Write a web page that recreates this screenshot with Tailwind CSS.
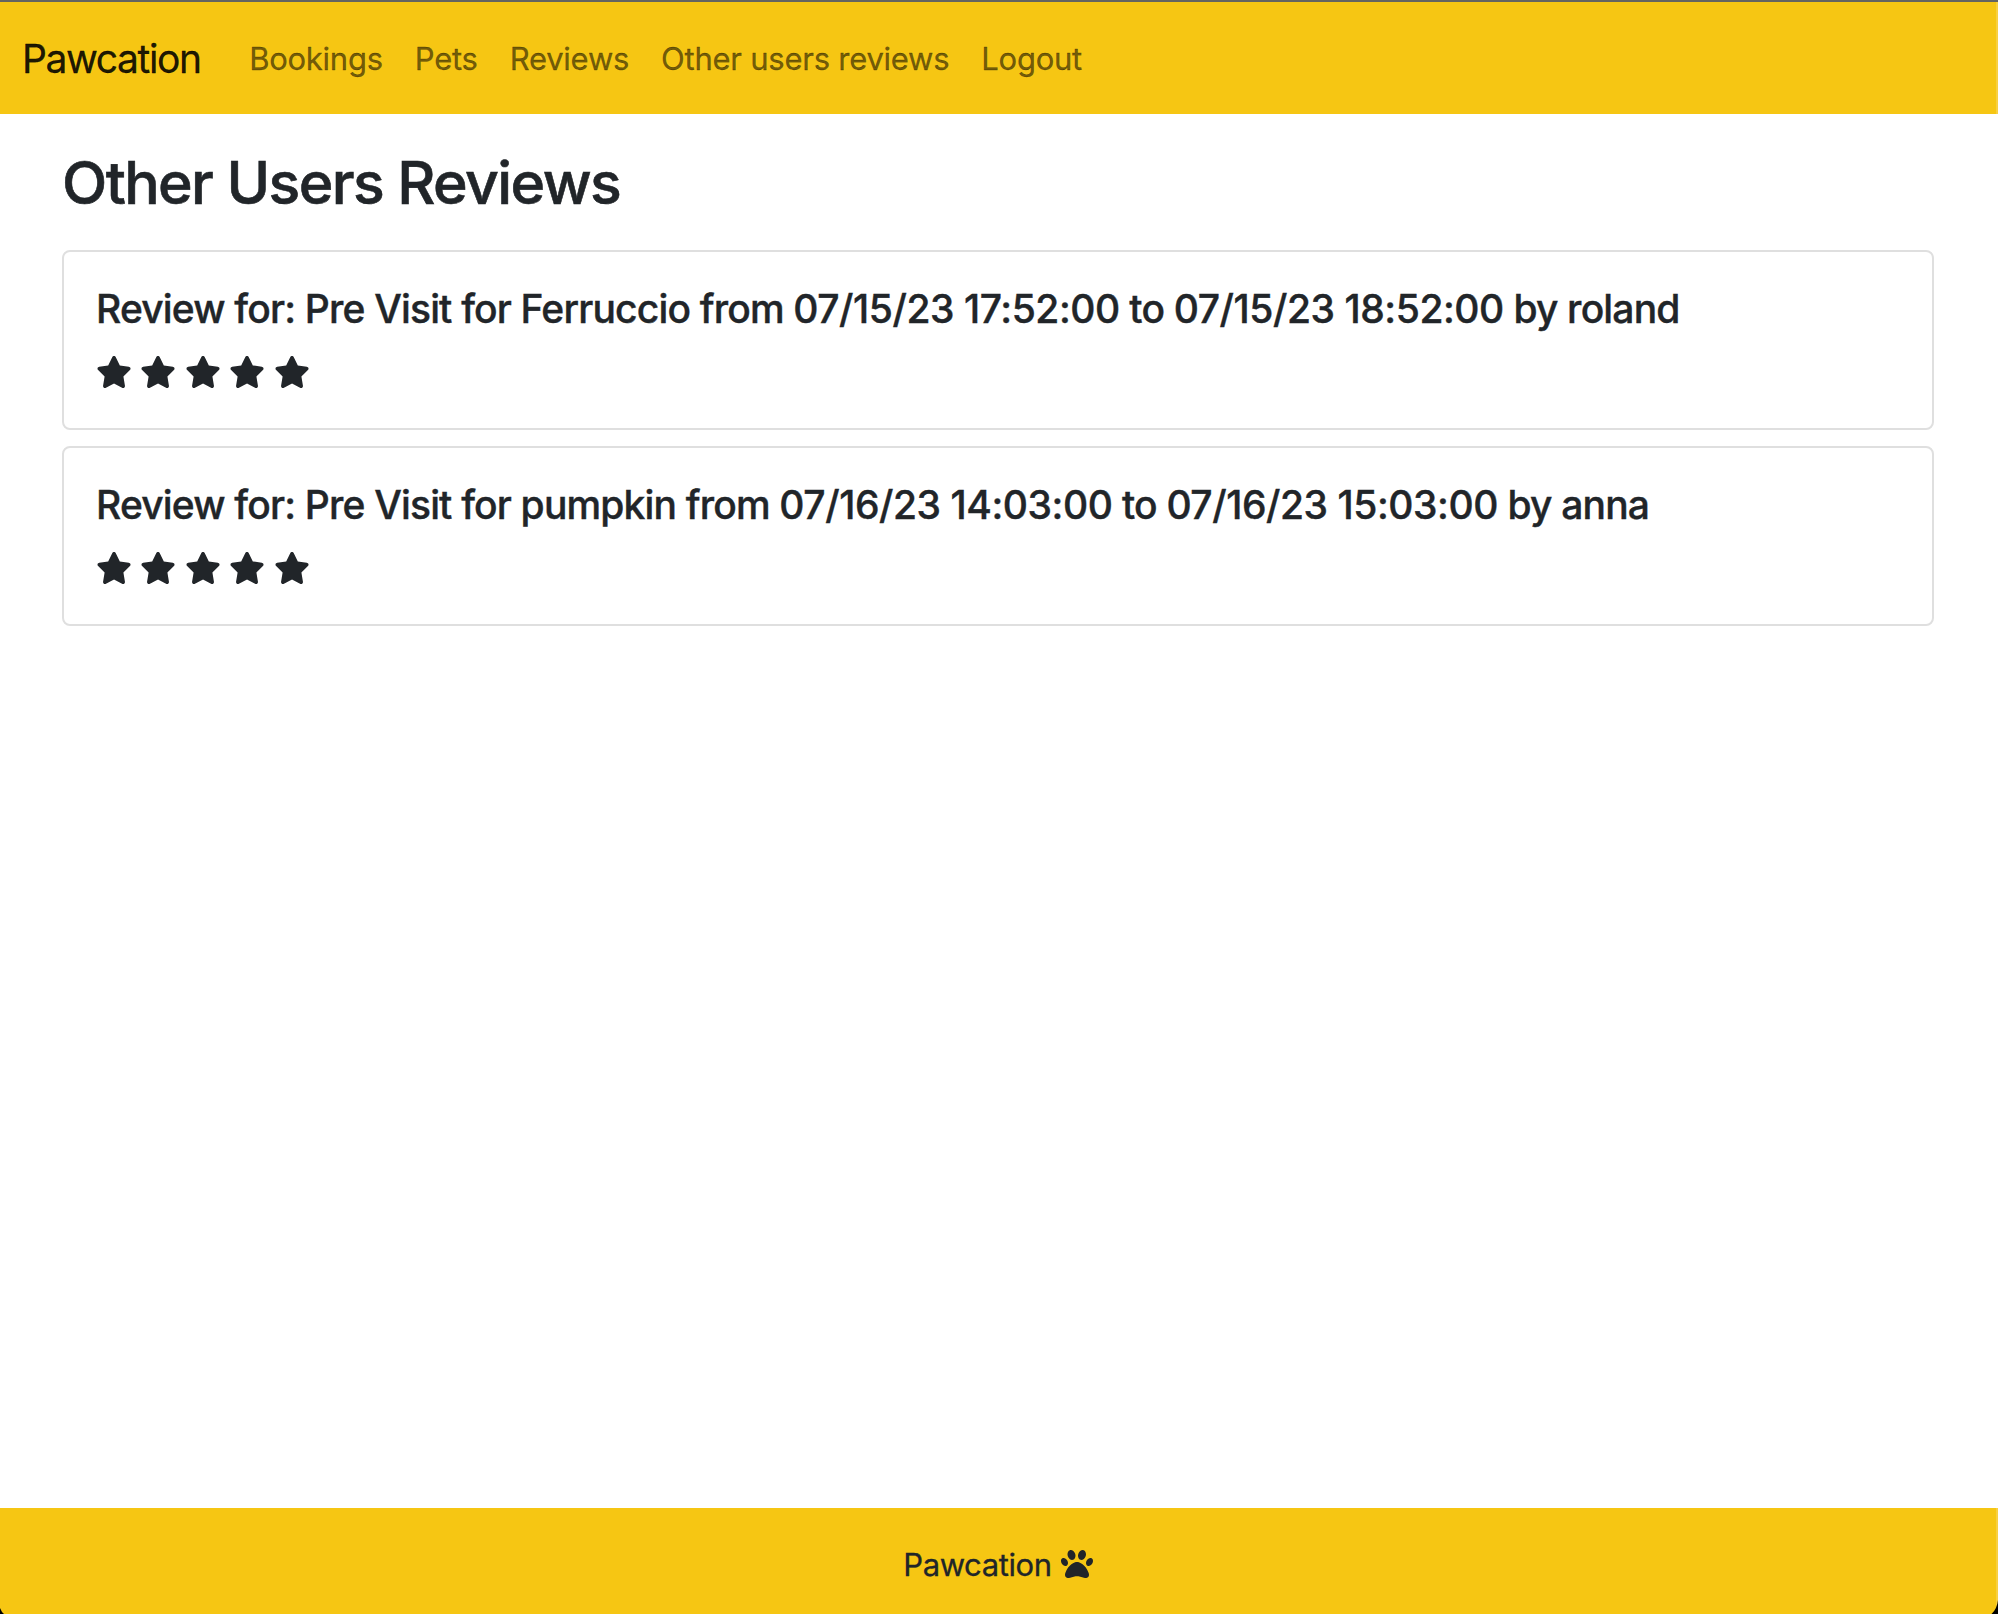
<!DOCTYPE html>
<html lang="en">
<head>
<meta charset="utf-8">
<title>Pawcation</title>
<script src="https://cdn.jsdelivr.net/npm/@tailwindcss/browser@4"></script>
</head>
<body class="bg-white text-[#212529] font-['Inter',sans-serif]">
<svg class="hidden">
  <symbol id="star" viewBox="0 0 576 512"><path d="M316.9 18C311.6 7 300.4 0 288.1 0s-23.4 7-28.8 18L195 150.3 51.4 171.5c-12 1.8-22 10.2-25.7 21.7s-.7 24.2 7.9 32.7L137.8 329 113.2 474.7c-2 12 3 24.2 12.9 31.3s23 8 33.8 2.3l128.3-68.5 128.3 68.5c10.8 5.7 23.9 4.9 33.8-2.3s14.9-19.3 12.9-31.3L438.5 329 542.7 225.9c8.6-8.5 11.7-21.2 7.9-32.7s-13.7-19.9-25.7-21.7L381.2 150.3 316.9 18z"/></symbol>
</svg>
<div class="relative flex h-[1614px] flex-col overflow-hidden border-t-2 border-[#646461]">
  <nav class="flex h-28 items-center border-r-2 border-[#f8d040] bg-[#f6c613] pl-[22px] text-[31px]">
    <a class="mr-[48.5px] pt-0.5 text-[39px] tracking-[-1.4px] text-black/90 [-webkit-text-stroke:0.3px]">Pawcation</a>
    <div class="flex gap-8 pt-[3px] tracking-[-0.25px] text-black/55 [-webkit-text-stroke:0.3px]">
      <a>Bookings</a><a>Pets</a><a>Reviews</a><a>Other users reviews</a><a>Logout</a>
    </div>
  </nav>
  <main class="flex grow flex-col pr-16 pl-[62px] pt-8">
    <h1 class="mb-8 pt-px text-[59px] leading-[71px] font-medium tracking-[-1.6px] [-webkit-text-stroke:0.6px]">Other Users Reviews</h1>
    <div class="flex flex-col gap-4">
      <section class="h-[180px] rounded-lg border-2 border-[#dfdfdf] px-8 pt-[33px]">
        <h2 class="text-[39px] leading-[48px] font-medium tracking-[-0.83px] whitespace-nowrap [-webkit-text-stroke:0.4px]">Review for: Pre Visit for Ferruccio from <span class="tracking-[-0.44px]">07/15/23 17:52:00</span> to <span class="tracking-[-0.44px]">07/15/23 18:52:00</span> by roland</h2>
        <div class="mt-[23px] flex gap-[8.4px]">
          <svg class="h-8 w-9 fill-current"><use href="#star"/></svg>
          <svg class="h-8 w-9 fill-current"><use href="#star"/></svg>
          <svg class="h-8 w-9 fill-current"><use href="#star"/></svg>
          <svg class="h-8 w-9 fill-current"><use href="#star"/></svg>
          <svg class="h-8 w-9 fill-current"><use href="#star"/></svg>
        </div>
      </section>
      <section class="h-[180px] rounded-lg border-2 border-[#dfdfdf] px-8 pt-[33px]">
        <h2 class="text-[39px] leading-[48px] font-medium tracking-[-0.83px] whitespace-nowrap [-webkit-text-stroke:0.4px]">Review for: Pre Visit for pumpkin from <span class="tracking-[-0.44px]">07/16/23 14:03:00</span> to <span class="tracking-[-0.44px]">07/16/23 15:03:00</span> by anna</h2>
        <div class="mt-[23px] flex gap-[8.4px]">
          <svg class="h-8 w-9 fill-current"><use href="#star"/></svg>
          <svg class="h-8 w-9 fill-current"><use href="#star"/></svg>
          <svg class="h-8 w-9 fill-current"><use href="#star"/></svg>
          <svg class="h-8 w-9 fill-current"><use href="#star"/></svg>
          <svg class="h-8 w-9 fill-current"><use href="#star"/></svg>
        </div>
      </section>
    </div>
  </main>
  <footer class="flex h-[106px] justify-center gap-[9px] border-r-2 border-[#f8d040] bg-[#f6c613] pt-10">
    <span class="pt-px text-[31px] leading-8 tracking-[-0.4px] [-webkit-text-stroke:0.3px]">Pawcation</span>
    <svg class="size-8 fill-current" viewBox="0 0 512 512"><path d="M226.5 92.9c14.3 42.9-.3 86.2-32.6 96.8s-70.1-15.6-84.4-58.5s.3-86.2 32.6-96.8s70.1 15.6 84.4 58.5zM100.4 198.6c18.9 32.4 14.3 70.1-10.2 84.1s-59.7-.9-78.5-33.3S-2.7 179.3 21.8 165.3s59.7 .9 78.5 33.3zM69.2 401.2C121.6 259.9 214.7 224 256 224s134.4 35.9 186.8 177.2c3.6 9.7 5.2 20.1 5.2 30.5v1.6c0 25.8-20.9 46.7-46.7 46.7c-11.5 0-22.9-1.4-34-4.2l-88-22c-15.3-3.8-31.3-3.8-46.6 0l-88 22c-11.1 2.8-22.5 4.2-34 4.2C84.9 480 64 459.1 64 433.3v-1.6c0-10.4 1.6-20.8 5.2-30.5zM421.8 282.7c-24.5-14-29.1-51.7-10.2-84.1s54-47.3 78.5-33.3s29.1 51.7 10.2 84.1s-54 47.3-78.5 33.3zM310.1 189.7c-32.3-10.6-46.9-53.9-32.6-96.8s52.1-69.1 84.4-58.5s46.9 53.9 32.6 96.8s-52.1 69.1-84.4 58.5z"/></svg>
  </footer>
  <!-- rounded window corners -->
  <svg class="absolute bottom-0 left-0 h-4 w-4" viewBox="0 0 16 16"><path d="M0 10Q1.500 14 4 16H0Z"/></svg>
  <svg class="absolute right-0 bottom-0 h-4 w-4" viewBox="0 0 16 16"><path d="M16 2Q15 11 9.500 16H16Z"/></svg>
</div>
</body>
</html>
